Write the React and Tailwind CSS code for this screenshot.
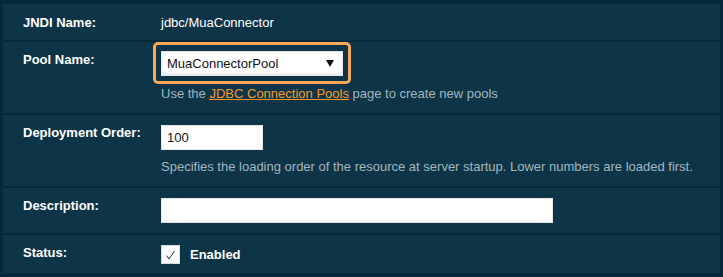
import React from "react";

const font = { fontFamily: '"Liberation Sans", Arial, sans-serif' };

function Row({ label, children, className = "" }) {
  return (
    <div className={`flex bg-[#0e3547] ${className}`}>
      <div className="w-[158px] shrink-0 pl-[20px] pt-[10px] text-[13px] leading-[15px] font-bold text-white">
        {label}
      </div>
      <div className="flex-1 min-w-0">{children}</div>
    </div>
  );
}

export default function App() {
  return (
    <div
      className="w-[723px] h-[277px] bg-[#032a3b] pt-[4px] pl-[3px] pr-[3px] pb-[4px] flex flex-col gap-[2px]"
      style={font}
    >
      {/* JNDI */}
      <div className="flex items-center h-[36px] bg-[#0e3547]">
        <div className="w-[158px] shrink-0 pl-[20px] text-[13px] leading-[15px] font-bold text-white">
          JNDI Name:
        </div>
        <div className="text-[13px] leading-[15px] text-white">jdbc/MuaConnector</div>
      </div>

      {/* Pool */}
      <Row label="Pool Name:" className="h-[71px]">
        <div className="relative pt-[9px]">
          <div className="absolute left-[-8px] top-0 w-[198px] h-[42px] rounded-[5px] border-[3px] border-[#f6a855]" />
          <div className="relative w-[182px] h-[25px] bg-white border border-[#e6e6e6] flex items-center justify-between pl-[5px] pr-[8px] shadow-[inset_0_-2px_2px_rgba(0,0,0,0.08)]">
            <span className="text-[13px] text-[#111]">MuaConnectorPool</span>
            <svg width="8" height="7" viewBox="0 0 8 7">
              <polygon points="0,0 8,0 4,7" fill="#111" />
            </svg>
          </div>
        </div>
        <div className="mt-[10px] text-[13px] leading-[16px] text-[#a2b6c0]">
          Use the{" "}
          <span className="text-[#f59a2a] underline">JDBC Connection Pools</span>{" "}
          page to create new pools
        </div>
      </Row>

      {/* Deployment order */}
      <Row label="Deployment Order:" className="h-[71px]">
        <div className="pt-[10px]">
          <div className="w-[102px] h-[25px] bg-white border border-[#e6e6e6] flex items-center pl-[5px] text-[13px] text-[#111]">
            100
          </div>
        </div>
        <div className="mt-[9px] text-[13px] leading-[16px] text-[#a2b6c0] whitespace-nowrap">
          Specifies the loading order of the resource at server startup. Lower numbers are loaded first.
        </div>
      </Row>

      {/* Description */}
      <Row label="Description:" className="h-[45px]">
        <div className="pt-[10px]">
          <div className="w-[392px] h-[25px] bg-white border border-[#e6e6e6]" />
        </div>
      </Row>

      {/* Status */}
      <Row label="Status:" className="h-[38px]">
        <div className="pt-[10px] flex items-center gap-[10px]">
          <div className="w-[19px] h-[19px] bg-white border border-[#dcdcdc] flex items-center justify-center">
            <svg width="11" height="10" viewBox="0 0 11 10">
              <polyline points="1.5,5.5 4,9 9.5,1" fill="none" stroke="#1c2a4e" strokeWidth="1" />
            </svg>
          </div>
          <span className="text-[13px] leading-[15px] font-bold text-white">Enabled</span>
        </div>
      </Row>
    </div>
  );
}
